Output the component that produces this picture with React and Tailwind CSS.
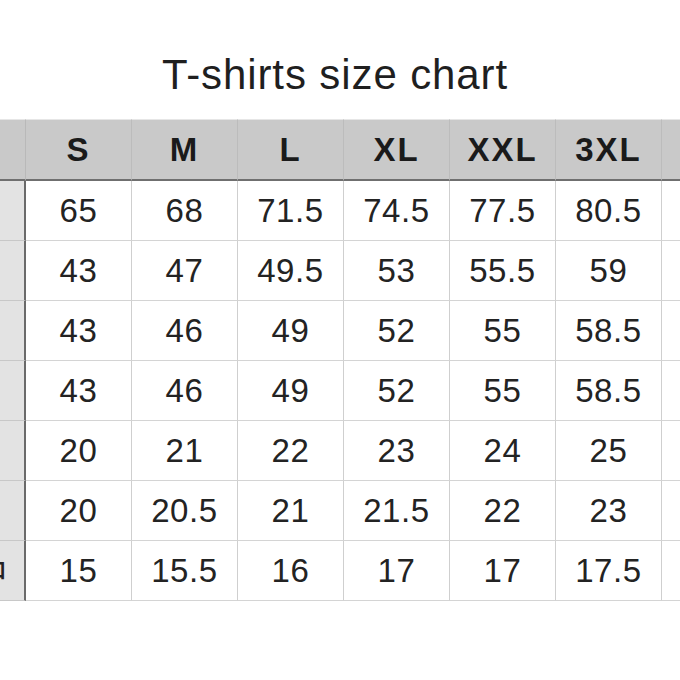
import React from "react";

const sizes = ["S", "M", "L", "XL", "XXL", "3XL"];
const rows = [
  ["65", "68", "71.5", "74.5", "77.5", "80.5"],
  ["43", "47", "49.5", "53", "55.5", "59"],
  ["43", "46", "49", "52", "55", "58.5"],
  ["43", "46", "49", "52", "55", "58.5"],
  ["20", "21", "22", "23", "24", "25"],
  ["20", "20.5", "21", "21.5", "22", "23"],
  ["15", "15.5", "16", "17", "17", "17.5"],
];

export default function App() {
  return (
    <div
      className="w-[680px] h-[680px] bg-white overflow-hidden text-[#222]"
      style={{ fontFamily: '"Liberation Sans", "Noto Sans CJK JP", sans-serif' }}
    >
      <div className="h-[119px] flex justify-center pt-[51px] pr-[10px]">
        <h1 className="text-[42px] leading-[48px] font-normal tracking-[0.9px] text-[#1f1f1f]">
          T-shirts size chart
        </h1>
      </div>
      <div className="grid grid-cols-[26px_repeat(6,106px)_1fr] w-[700px]">
        {/* header */}
        <div className="h-[62px] bg-[#c9c9c9] border-t border-[#e6e6e6] border-b-2 border-b-[#6f6f6f] border-r border-r-[#b9b9b9]" />
        {sizes.map((s) => (
          <div
            key={s}
            className="h-[62px] bg-[#c9c9c9] border-t border-[#e6e6e6] border-b-2 border-b-[#6f6f6f] border-r border-r-[#bcbcbc] flex items-center justify-center text-[33px] font-bold tracking-[2px] text-[#1a1a1a]"
          >
            {s}
          </div>
        ))}
        <div className="h-[62px] bg-[#c9c9c9] border-t border-[#e6e6e6] border-b-2 border-b-[#6f6f6f]" />
        {/* body */}
        {rows.map((r, i) => (
          <React.Fragment key={i}>
            <div className="h-[60px] bg-[#e3e3e3] border-r-2 border-r-[#6a6a6a] border-b border-b-[#c8c8c8] flex items-center justify-end overflow-hidden pr-[18px]">
              {i === 6 && (
                <span className="text-[20px] font-bold text-[#222] leading-none">口</span>
              )}
            </div>
            {r.map((v, j) => (
              <div
                key={j}
                className="h-[60px] border-r border-r-[#cfcfcf] border-b border-b-[#d4d4d4] flex items-center justify-center text-[33px] tracking-[0.6px] text-[#232323]"
              >
                {v}
              </div>
            ))}
            <div className="h-[60px] border-b border-b-[#d4d4d4]" />
          </React.Fragment>
        ))}
      </div>
    </div>
  );
}
